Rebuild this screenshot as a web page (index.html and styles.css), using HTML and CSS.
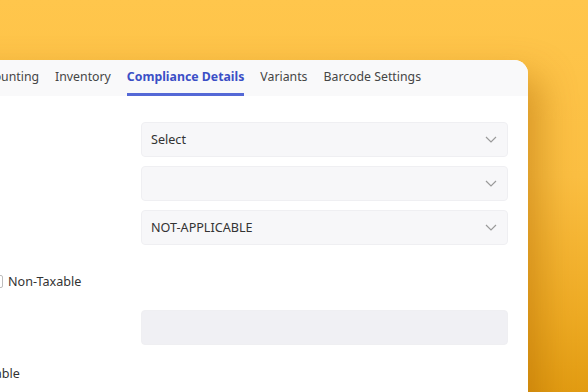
FILE: index.html
```html
<!DOCTYPE html>
<html lang="en">
  <head>
    <meta charset="UTF-8" />
    <meta name="viewport" content="width=device-width, initial-scale=1.0" />
    <title>Item - Compliance Details</title>
    <link rel="stylesheet" href="styles.css">
  </head>
  <body>
    <div class="stage">
      <div class="card">
        <nav class="tabs">
          <a class="tab">Accounting</a>
          <a class="tab">Inventory</a>
          <a class="tab active">Compliance Details</a>
          <a class="tab">Variants</a>
          <a class="tab">Barcode Settings</a>
        </nav>

        <form class="form">
          <div class="row">
            <span class="label"></span>
            <div class="select">
              <span class="select-text">Select</span>
              <svg class="chevron" width="12" height="7" viewBox="0 0 12 7"><path d="M1 1l5 5 5-5" fill="none" stroke="#9a9a9a" stroke-width="1.2"/></svg>
            </div>
          </div>
          <div class="row">
            <span class="label"></span>
            <div class="select">
              <span class="select-text"></span>
              <svg class="chevron" width="12" height="7" viewBox="0 0 12 7"><path d="M1 1l5 5 5-5" fill="none" stroke="#9a9a9a" stroke-width="1.2"/></svg>
            </div>
          </div>
          <div class="row">
            <span class="label"></span>
            <div class="select">
              <span class="select-text">NOT-APPLICABLE</span>
              <svg class="chevron" width="12" height="7" viewBox="0 0 12 7"><path d="M1 1l5 5 5-5" fill="none" stroke="#9a9a9a" stroke-width="1.2"/></svg>
            </div>
          </div>

          <div class="check-row">
            <span class="checkbox"></span>
            <span class="check-text">Non-Taxable</span>
          </div>

          <div class="row">
            <span class="label"></span>
            <div class="input"></div>
          </div>

          <div class="note-row">Taxable</div>
        </form>
      </div>
    </div>
  </body>
</html>
```

FILE: styles.css
```css
* {
  margin: 0;
  padding: 0;
  box-sizing: border-box;
}

html,
body {
  width: 100%;
  height: 100%;
  overflow: hidden;
}

body {
  font-family: "Noto Sans", "Open Sans", sans-serif;
  font-size: 12.6px;
  color: #333333;
  background: linear-gradient(180deg, #ffc64c 0%, #fbbf42 45%, #eeab24 80%, #e29c12 100%);
}

.stage {
  padding-top: 60px;
}

.card {
  width: 688px;
  height: 380px;
  margin-left: -160px;
  background-color: #ffffff;
  border-radius: 14px;
  box-shadow: 12px 16px 36px rgba(170, 100, 0, 0.45);
  overflow: hidden;
}

.tabs {
  display: flex;
  gap: 16px;
  height: 36px;
  padding-left: 134px;
  background-color: #f9f9fa;
}

.tab {
  display: flex;
  align-items: center;
  height: 36px;
  font-size: 12.3px;
  color: #454545;
  border-bottom: 3px solid transparent;
  padding-bottom: 1px;
  white-space: nowrap;
}

.tab.active {
  color: #3b4fc6;
  font-weight: 700;
  border-bottom-color: #5468d6;
}

.form {
  display: flex;
  flex-direction: column;
  padding: 26px 20px 0 20px;
}

.row {
  display: grid;
  grid-template-columns: 281px 367px;
  align-items: center;
  margin-bottom: 9px;
}

.select,
.input {
  height: 35px;
  border: 1px solid #efeff2;
  border-radius: 4px;
}

.select {
  display: flex;
  align-items: center;
  justify-content: space-between;
  padding: 0 10px 1px 9px;
  background-color: #f7f7f9;
}

.input {
  background-color: #f0f0f4;
}

.chevron {
  display: block;
}

.check-row {
  display: flex;
  align-items: center;
  gap: 5px;
  height: 30px;
  margin-top: 12px;
  margin-bottom: 14px;
  padding-left: 130px;
}

.checkbox {
  width: 13px;
  height: 13px;
  border: 1px solid #bdbdbd;
  border-radius: 2px;
  background-color: #ffffff;
}

.check-text {
  color: #333333;
}

.note-row {
  margin-top: 11px;
  padding-left: 115px;
  color: #333333;
}
```
